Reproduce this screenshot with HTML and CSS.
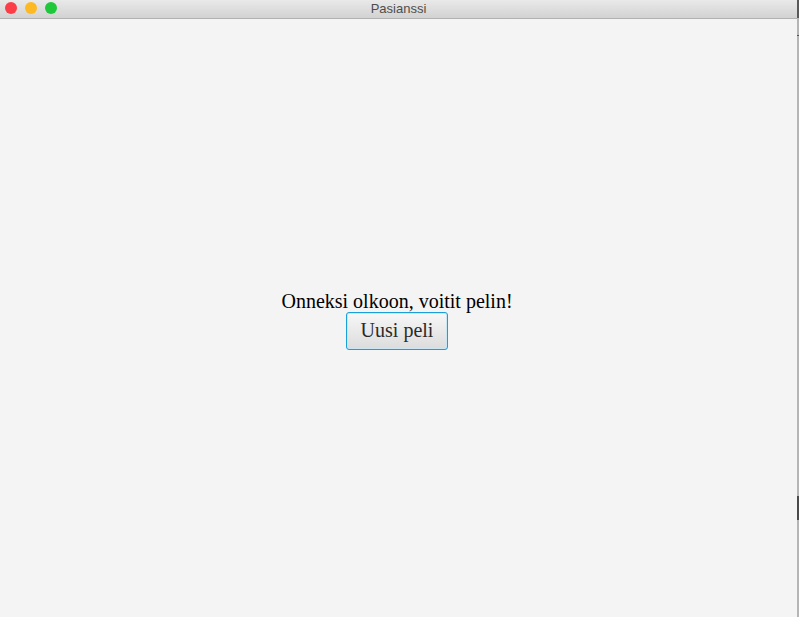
FILE: index.html
```html
<!DOCTYPE html>
<html>
<head>
<meta charset="utf-8">
<link rel="stylesheet" href="styles.css">
</head>
<body>
<div class="screen">
  <div class="window">
    <div class="titlebar">
      <div class="lights">
        <span class="light red"></span>
        <span class="light yellow"></span>
        <span class="light green"></span>
      </div>
      <div class="title">Pasianssi</div>
    </div>
    <div class="content">
      <div class="message">Onneksi olkoon, voitit pelin!</div>
      <button class="btn">Uusi peli</button>
    </div>
  </div>
  <div class="edge">
    <div class="seg s1"></div>
    <div class="seg s2"></div>
    <div class="seg s3"></div>
    <div class="seg s4"></div>
    <div class="seg s5"></div>
  </div>
</div>
</body>
</html>
```

FILE: styles.css
```css
html, body {
  margin: 0;
  padding: 0;
  width: 799px;
  height: 617px;
  overflow: hidden;
  background: #f4f4f4;
}
.screen {
  display: flex;
  width: 799px;
  height: 617px;
}
.window {
  width: 797px;
  height: 617px;
  display: flex;
  flex-direction: column;
  background: #f4f4f4;
}
.titlebar {
  height: 18px;
  flex: none;
  position: relative;
  background: linear-gradient(#e9e9e9, #d2d2d2);
  border-bottom: 1px solid #b1b1b1;
  display: flex;
  align-items: center;
  justify-content: center;
}
.lights {
  position: absolute;
  left: 5px;
  top: 2px;
  display: flex;
  gap: 8px;
}
.light {
  width: 12px;
  height: 12px;
  border-radius: 50%;
  display: block;
}
.red { background: #fc3d48; }
.yellow { background: #fdb923; }
.green { background: #1ec83a; }
.title {
  font-family: "Liberation Sans", Arial, sans-serif;
  font-size: 13px;
  color: #4d4d4d;
  line-height: 18px;
}
.content {
  flex: 1;
  display: flex;
  flex-direction: column;
  align-items: center;
  justify-content: center;
  background: #f4f4f4;
  padding: 3px 3px 0 0;
}
.message {
  font-family: "Liberation Serif", "Times New Roman", serif;
  font-size: 20px;
  color: #000;
  line-height: 22px;
}
.btn {
  margin-top: 0;
  width: 102px;
  height: 38px;
  font-family: "Liberation Serif", "Times New Roman", serif;
  font-size: 20px;
  color: #2a2a2a;
  background: linear-gradient(#f7f7f7, #dcdcdc);
  border: 1px solid #1a9fd9;
  border-radius: 3px;
  box-shadow: inset 0 0 0 1px #c8e6f4;
  padding: 0;
}
.edge {
  width: 2px;
  height: 617px;
  background: #b5b5b5;
  display: flex;
  flex-direction: column;
}
.seg { width: 2px; }
.s1 { height: 18px; background: #595959; }
.s2 { height: 17px; background: #b5b5b5; }
.s3 { height: 1px; background: #555; }
.s4 { height: 460px; background: #b5b5b5; }
.s5 { height: 24px; background: #4a4a4a; }
```
